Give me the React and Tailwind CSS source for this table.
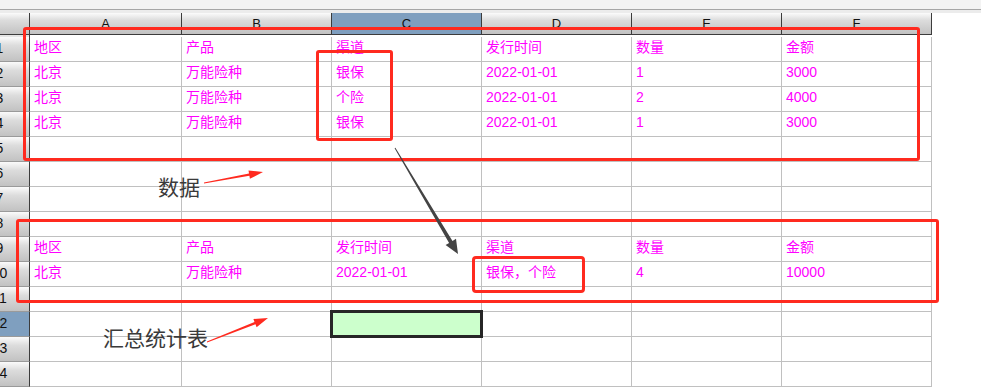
import React from "react";

const columns = [
  { label: "A", width: "w-[152px]" },
  { label: "B", width: "w-[150px]" },
  { label: "C", width: "w-[150px]", selected: true },
  { label: "D", width: "w-[150px]" },
  { label: "E", width: "w-[150px]" },
  { label: "F", width: "w-[150px]" },
];

const data = {
  1: ["地区", "产品", "渠道", "发行时间", "数量", "金额"],
  2: ["北京", "万能险种", "银保", "2022-01-01", "1", "3000"],
  3: ["北京", "万能险种", "个险", "2022-01-01", "2", "4000"],
  4: ["北京", "万能险种", "银保", "2022-01-01", "1", "3000"],
  9: ["地区", "产品", "发行时间", "渠道", "数量", "金额"],
  10: ["北京", "万能险种", "2022-01-01", "银保，个险", "4", "10000"],
};

const rowNumbers = Array.from({ length: 14 }, (_, i) => i + 1);

const headerBg = "bg-[linear-gradient(#fbfbfb,#dcdcdc_35%,#c2c2c2)]";

const RowHeader = ({ n, selected }) => (
  <div
    className={`w-[30px] h-full shrink-0 overflow-hidden border-r border-b border-r-[#3c3c3c] border-b-[#9a9a9a] flex items-center text-[14px] text-[#111] ${
      selected ? "bg-[#7f9fbf]" : headerBg
    }`}
  >
    <div className="-ml-[22px] w-[43px] text-center shrink-0 pb-[1px]">{n}</div>
  </div>
);

const SheetRow = ({ n }) => {
  const values = data[n] || [];
  return (
    <div className="flex h-[25px]">
      <RowHeader n={n} selected={n === 12} />
      {columns.map((col, i) => (
        <div
          key={col.label}
          className={`${col.width} h-full shrink-0 border-r border-b border-[#c0c0c0] flex items-center pl-[4px] pb-[3px] text-[14px] text-[#ff00ff] whitespace-nowrap`}
        >
          {values[i]}
        </div>
      ))}
    </div>
  );
};

const Arrows = () => (
  <svg className="absolute left-0 top-0 pointer-events-none" width="981" height="387">
    <polygon
      points="395.4,147.7 452.5,240.9 456,238.8 458,254 445.6,245 449.1,242.9 394.6,148.3"
      fill="#444444"
    />
    <polygon
      points="204,183.4 249.4,175.8 249.9,178.8 263,172 248.5,170.4 249,173.4 204,182.6"
      fill="#ff2a1f"
    />
    <polygon
      points="207.1,342.4 255.5,324.3 256.6,327.2 268,318 253.4,319 254.5,321.9 206.9,341.6"
      fill="#ff2a1f"
    />
  </svg>
);

export default function App() {
  return (
    <div className="relative w-[981px] h-[387px] overflow-hidden bg-white font-['Liberation_Sans','Noto_Sans_CJK_SC',sans-serif]">
      {/* toolbar strip */}
      <div className="h-[9px] bg-[#f3f3f3]" />
      <div className="h-[1px] bg-[#a6a6a6]" />
      <div className="h-[3px] bg-[#ececec]" />

      {/* column headers */}
      <div className="flex h-[22px]">
        <div className={`w-[30px] shrink-0 border-r border-b border-[#3c3c3c] ${headerBg}`} />
        {columns.map((col) => (
          <div
            key={col.label}
            className={`${col.width} shrink-0 border-r border-b border-[#3c3c3c] flex items-center justify-center text-[13px] text-[#111] pt-[1px] ${
              col.selected ? "bg-[#7f9fbf]" : headerBg
            }`}
          >
            {col.label}
          </div>
        ))}
      </div>
      <div className="flex h-[2px]">
        <div className="w-[30px] shrink-0 border-r border-[#3c3c3c] bg-[#e4e4e4]" />
      </div>

      {/* grid */}
      {rowNumbers.map((n) => (
        <SheetRow key={n} n={n} />
      ))}

      {/* active cell C12 */}
      <div className="absolute left-[330px] top-[310px] w-[153px] h-[28px] border-[3px] border-[#262626] bg-[#ccffcc]" />

      {/* annotations drawn over the sheet */}
      <div className="absolute left-[23px] top-[27px] w-[897px] h-[134px] border-[3px] border-[#ff2a1f] rounded-[3px]" />
      <div className="absolute left-[316px] top-[50px] w-[77px] h-[91px] border-[3px] border-[#ff2a1f] rounded-[3px]" />
      <div className="absolute left-[16px] top-[219px] w-[923px] h-[84px] border-[3px] border-[#ff2a1f] rounded-[3px]" />
      <div className="absolute left-[472px] top-[256px] w-[113px] h-[37px] border-[3px] border-[#ff2a1f] rounded-[4px]" />

      <div className="absolute left-[158px] top-[176px] text-[21px] leading-none text-[#3a3a3a] font-['Noto_Sans_CJK_SC',sans-serif]">
        数据
      </div>
      <div className="absolute left-[103px] top-[327px] text-[21px] leading-none text-[#3a3a3a] font-['Noto_Sans_CJK_SC',sans-serif]">
        汇总统计表
      </div>

      <Arrows />
    </div>
  );
}
